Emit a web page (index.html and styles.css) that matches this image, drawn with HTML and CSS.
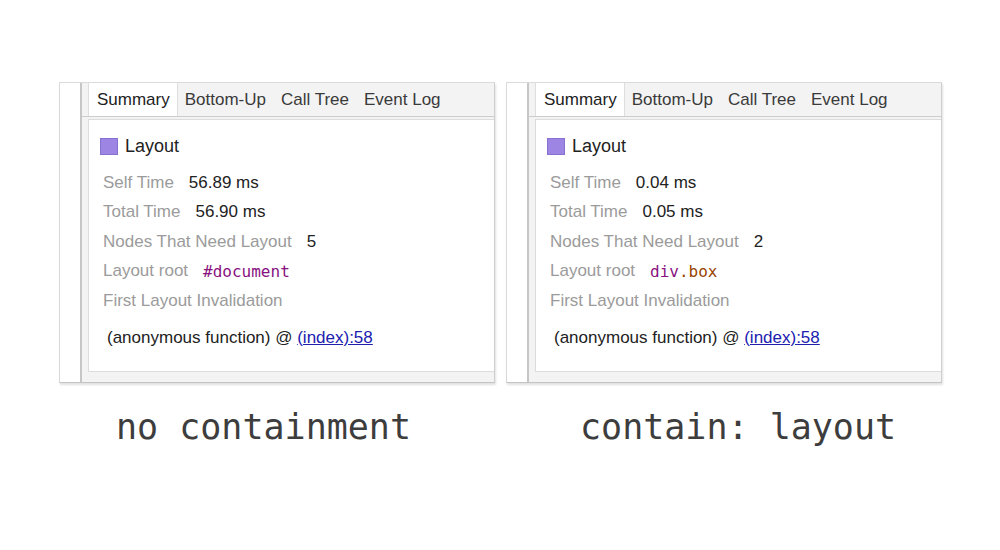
FILE: index.html
```html
<!DOCTYPE html>
<html>
<head>
<meta charset="utf-8">
<link rel="stylesheet" href="styles.css">
</head>
<body>
<div class="stage">
  <div class="col col-a">
    <div class="panel">
      <div class="sidebar"></div>
      <div class="main">
        <div class="tabs">
          <span class="tab active">Summary</span>
          <span class="tab">Bottom-Up</span>
          <span class="tab">Call Tree</span>
          <span class="tab">Event Log</span>
        </div>
        <div class="content">
          <div class="heading"><span class="swatch"></span><span>Layout</span></div>
          <div class="row"><span class="label">Self Time</span><span class="value">56.89 ms</span></div>
          <div class="row"><span class="label">Total Time</span><span class="value">56.90 ms</span></div>
          <div class="row"><span class="label">Nodes That Need Layout</span><span class="value">5</span></div>
          <div class="row"><span class="label">Layout root</span><span class="value mono"><span class="node">#document</span></span></div>
          <div class="row"><span class="label">First Layout Invalidation</span></div>
          <div class="stack">(anonymous function) @ <a class="link" href="#">(index):58</a></div>
        </div>
      </div>
    </div>
    <div class="caption">no containment</div>
  </div>
  <div class="col col-b">
    <div class="panel">
      <div class="sidebar"></div>
      <div class="main">
        <div class="tabs">
          <span class="tab active">Summary</span>
          <span class="tab">Bottom-Up</span>
          <span class="tab">Call Tree</span>
          <span class="tab">Event Log</span>
        </div>
        <div class="content">
          <div class="heading"><span class="swatch"></span><span>Layout</span></div>
          <div class="row"><span class="label">Self Time</span><span class="value">0.04 ms</span></div>
          <div class="row"><span class="label">Total Time</span><span class="value">0.05 ms</span></div>
          <div class="row"><span class="label">Nodes That Need Layout</span><span class="value">2</span></div>
          <div class="row"><span class="label">Layout root</span><span class="value mono"><span class="node">div</span><span class="cls">.box</span></span></div>
          <div class="row"><span class="label">First Layout Invalidation</span></div>
          <div class="stack">(anonymous function) @ <a class="link" href="#">(index):58</a></div>
        </div>
      </div>
    </div>
    <div class="caption">contain: layout</div>
  </div>
</div>
</body>
</html>
```
FILE: styles.css
```css
html, body {
  margin: 0;
  padding: 0;
  background: #ffffff;
}

body {
  width: 1000px;
  height: 550px;
  overflow: hidden;
  font-family: "Liberation Sans", Arial, sans-serif;
}

.stage {
  display: flex;
  gap: 11px;
  padding: 82px 0 0 59px;
}

.col-a { width: 436px; }
.col-b { width: 436px; }

.panel {
  display: flex;
  border: 1px solid #dadada;
  border-bottom-color: #c4c4c4;
  border-right-color: #cfcfcf;
  box-shadow: 1px 2px 2px rgba(0, 0, 0, 0.12);
}

.sidebar {
  width: 20px;
  background: #ffffff;
  border-right: 2px solid #c6c6c6;
}

.main {
  flex: 1;
  display: flex;
  flex-direction: column;
  background: #f3f3f3;
  padding-bottom: 10px;
}

.tabs {
  display: flex;
  height: 33px;
  padding-left: 6px;
  border-bottom: 1px solid #cdcdcd;
}

.tab {
  padding: 1px 8px 0 7px;
  line-height: 32px;
  font-size: 17px;
  color: #3a3a3a;
  white-space: nowrap;
}

.tab.active {
  background: #ffffff;
  color: #222222;
  padding-left: 8px;
  padding-right: 7px;
  border-left: 1px solid #dedede;
  border-right: 1px solid #dedede;
}

.content {
  margin: 2px 0 0 6px;
  background: #ffffff;
  border: 1px solid #dcdcdc;
  border-right: none;
  padding: 14px 11px 21px 11px;
}

.heading {
  display: flex;
  align-items: center;
  height: 24px;
  font-size: 18px;
  color: #222222;
  margin-bottom: 10px;
}

.swatch {
  width: 16px;
  height: 15px;
  background: #9d85e3;
  border: 1px solid #8670d0;
  margin-right: 7px;
}

.row {
  display: flex;
  align-items: center;
  height: 29.5px;
  padding-left: 3px;
  font-size: 17px;
  white-space: nowrap;
}

.label {
  color: #9b9b9b;
}

.value {
  color: #222222;
  margin-left: 15px;
}

.mono {
  font-family: "DejaVu Sans Mono", "Liberation Mono", monospace;
  font-size: 16px;
}

.node { color: #881280; }
.cls { color: #994500; }

.stack {
  margin-top: 10.5px;
  padding-left: 7px;
  line-height: 24px;
  font-size: 17px;
  color: #222222;
  white-space: nowrap;
}

.link {
  color: #2020b0;
  text-decoration: underline;
}

.caption {
  margin-top: 24px;
  font-family: "DejaVu Sans Mono", "Liberation Mono", monospace;
  font-size: 35px;
  line-height: 40px;
  color: #3d3d3d;
  white-space: nowrap;
}

.col-a .caption { padding-left: 57px; }
.col-b .caption { padding-left: 74px; }
```
